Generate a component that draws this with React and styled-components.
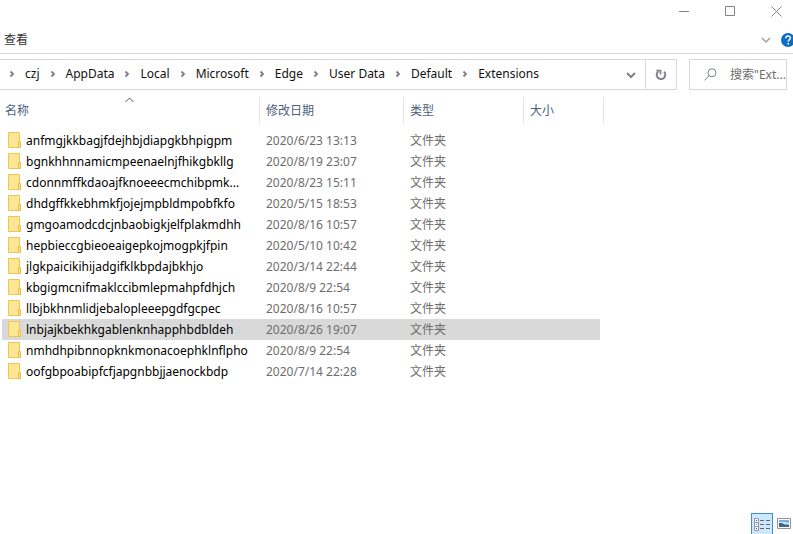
import React, { useState } from "react";
import styled, { createGlobalStyle } from "styled-components";

const GlobalStyle = createGlobalStyle`
  *, *::before, *::after { box-sizing: border-box; }
  body {
    margin: 0;
    background: #fff;
    font-family: "Noto Sans", "Noto Sans CJK SC", sans-serif;
    font-size: 12px;
    line-height: 20px;
    color: #000;
  }
  button, input, table { font: inherit; color: inherit; }
`;

const Window = styled.div`
  display: flex;
  flex-direction: column;
  min-height: 100vh;
  overflow: hidden;
`;

const TitleBar = styled.header`
  display: flex;
  justify-content: flex-end;
  height: 26px;
`;

const IconButton = styled.button`
  display: flex;
  align-items: center;
  justify-content: center;
  flex: none;
  width: ${(p) => p.$width}px;
  padding: 0;
  border: 0;
  background: transparent;
  color: ${(p) => p.$color || "#85808a"};
  svg { display: block; }
`;

const CaptionButton = styled(IconButton).attrs({ $width: 46 })`
  height: 22px;
  &:last-child { margin-right: -6px; }
`;

const Ribbon = styled.nav`
  display: flex;
  align-items: center;
  height: 28px;
  padding-left: 4px;
  border-bottom: 1px solid #d9d9d9;
`;

const RibbonTab = styled.button`
  margin-right: auto;
  padding: 0;
  border: 0;
  background: transparent;
  color: #333;
`;

const HelpButton = styled(IconButton).attrs({ $width: 14 })`
  margin-left: 8px;
  margin-right: -2px;
`;

const NavRow = styled.div`
  display: flex;
  gap: 12px;
  margin-top: 5px;
  padding-right: 6px;
`;

const AddressBar = styled.div`
  display: flex;
  flex: 1;
  min-width: 0;
  height: 31px;
  border: 1px solid #d9d9d9;
  border-left: 0;
`;

const Crumbs = styled.ol`
  display: flex;
  flex: 1;
  align-items: center;
  min-width: 0;
  margin: 0;
  padding: 0 0 1px 9px;
  list-style: none;
  white-space: nowrap;
`;

const Crumb = styled.li`
  display: flex;
  align-items: center;
  gap: 10px;
  margin-right: 10px;
  svg { display: block; }
`;

const CrumbLink = styled.a`
  color: #111;
  text-decoration: none;
`;

const RefreshButton = styled(IconButton).attrs({ $width: 31 })`
  border-left: 1px solid #d9d9d9;
`;

const SearchBox = styled.label`
  display: flex;
  align-items: center;
  gap: 13px;
  width: 98px;
  height: 31px;
  padding-left: 14px;
  border: 1px solid #d9d9d9;
  svg { flex: none; }
`;

const SearchInput = styled.input`
  flex: 1;
  min-width: 0;
  padding: 0;
  border: 0;
  outline: 0;
  background: transparent;
  &::placeholder { color: #6d6d6d; opacity: 1; }
`;

const FileArea = styled.main`
  flex: 1;
  padding: 7px 0 0 2px;
`;

const FileTable = styled.table`
  width: 602px;
  border-collapse: separate;
  border-spacing: 0;
  table-layout: fixed;
`;

const HeadCell = styled.th`
  position: relative;
  width: ${(p) => p.$width}px;
  height: 27px;
  padding: 0 0 0 ${(p) => p.$indent}px;
  border-right: 1px solid #e5e5e5;
  color: #4c607a;
  font-weight: 400;
  text-align: left;
`;

const SortMark = styled.svg`
  position: absolute;
  top: 0;
  left: 50%;
  margin-left: -6px;
`;

const Spacer = styled.tr`
  height: 6px;
`;

const FileRow = styled.tr`
  td { background-color: ${(p) => (p.$selected ? "#d9d9d9" : "transparent")}; }
`;

const Cell = styled.td`
  height: 21px;
  padding: 0 0 0 6px;
  color: #6d6d6d;
  white-space: nowrap;
  &:last-child {
    padding: 0 4px 0 0;
    background-clip: content-box;
  }
`;

const NameCell = styled(Cell)`
  color: #000;
`;

const FileName = styled.span`
  display: flex;
  align-items: center;
  gap: 5px;
  svg { flex: none; }
`;

const StatusBar = styled.footer`
  display: flex;
  justify-content: flex-end;
  height: 21px;
  overflow: hidden;
`;

const ViewButton = styled(IconButton).attrs({ $width: 22 })`
  height: 24px;
  padding-top: 2px;
  align-items: flex-start;
  border: 1px solid ${(p) => (p.$active ? "#3c91d0" : "transparent")};
  background: ${(p) => (p.$active ? "#cce8ff" : "transparent")};
  &:last-child { margin-right: -2px; }
`;

const MinimizeIcon = () => (
  <svg width="10" height="11" viewBox="0 0 10 11" fill="none" stroke="currentColor" aria-hidden="true">
    <path d="M0 5.5h10" />
  </svg>
);

const MaximizeIcon = () => (
  <svg width="11" height="11" viewBox="0 0 11 11" fill="none" stroke="currentColor" aria-hidden="true">
    <path d="M.5.5h9v9h-9z" />
  </svg>
);

const CloseIcon = () => (
  <svg width="11" height="11" viewBox="0 0 11 11" fill="none" stroke="currentColor" aria-hidden="true">
    <path d="M.5.5l10 10M10.5.5l-10 10" />
  </svg>
);

const ChevronDown = ({ weight = 1.5 }) => (
  <svg width="10" height="8" viewBox="0 0 10 8" fill="none" stroke="currentColor" strokeWidth={weight} aria-hidden="true">
    <path d="M1 2l4 4 4-4" />
  </svg>
);

const ChevronRight = () => (
  <svg width="6" height="8" viewBox="0 0 6 8" fill="none" stroke="#857b80" strokeWidth="1.8" aria-hidden="true">
    <path d="M1.5 1.5l2.5 2.5-2.5 2.5" />
  </svg>
);

const HelpIcon = () => (
  <svg width="14" height="14" viewBox="0 0 14 14" aria-hidden="true">
    <circle cx="7" cy="7" r="7" fill="#0d6cc4" />
    <path d="M4.8 5.3c0-3 4.6-3 4.6-.3 0 1.6-2.2 1.6-2.2 3.6" fill="none" stroke="#fff" strokeWidth="1.5" />
    <path d="M6.4 9.8h1.6v1.6H6.4z" fill="#fff" />
  </svg>
);

const RefreshIcon = () => (
  <svg width="12" height="12" viewBox="0 0 12 12" fill="none" stroke="currentColor" strokeWidth="2" aria-hidden="true">
    <path d="M9 2.7a4.3 4.3 0 1 1-5.500-.4" />
    <path d="M1.5 1.5h4v4" strokeWidth="1.7" />
  </svg>
);

const SearchIcon = () => (
  <svg width="13" height="13" viewBox="0 0 13 13" fill="none" stroke="#7c8487" aria-hidden="true">
    <circle cx="8" cy="4.8" r="4" />
    <path d="M5.2 7.6L.5 12.4" />
  </svg>
);

const FolderIcon = () => (
  <svg width="13" height="18" viewBox="0 0 13 18" aria-hidden="true">
    <path d="M.5.5h11v15H.5z" fill="#ffe694" stroke="#edc751" />
    <path d="M10.5 9.5h2v6h-2z" fill="#ffe694" stroke="#e8bd42" />
  </svg>
);

const DetailsIcon = () => (
  <svg width="16" height="16" viewBox="0 0 16 16" aria-hidden="true">
    {["#4a4a78", "#3c9be8", "#b02020"].map((fill, i) => (
      <g key={fill} transform={`translate(0 ${i * 4})`}>
        <path d="M.5 2.5h4v4h-4z" fill="#fff" stroke="#9a90a0" />
        <path d="M2 4h1v1H2z" fill={fill} />
        <path d="M6 4.5h4M12 4.5h4" stroke="#666" />
      </g>
    ))}
  </svg>
);

const PictureIcon = () => (
  <svg width="14" height="16" viewBox="0 0 14 16" aria-hidden="true">
    <path d="M.5 2.5h13v10H.5z" fill="#fff" stroke="#9a90a0" />
    <path d="M2 4h10v7H2z" fill="#6fb2ea" />
    <path d="M2 6h5l5 1v2H2z" fill="#d7ecfa" />
    <path d="M2 7h3l3 1.5h4V11H2z" fill="#3d6685" />
  </svg>
);

const path = ["czj", "AppData", "Local", "Microsoft", "Edge", "User Data", "Default", "Extensions"];

const columns = [
  { label: "名称", width: 258, indent: 3, sorted: true },
  { label: "修改日期", width: 144, indent: 6 },
  { label: "类型", width: 120, indent: 6 },
  { label: "大小", width: 80, indent: 6 },
];

const files = [
  ["anfmgjkkbagjfdejhbjdiapgkbhpigpm", "2020/6/23 13:13"],
  ["bgnkhhnnamicmpeenaelnjfhikgbkllg", "2020/8/19 23:07"],
  ["cdonnmffkdaoajfknoeeecmchibpmk...", "2020/8/23 15:11"],
  ["dhdgffkkebhmkfjojejmpbldmpobfkfo", "2020/5/15 18:53"],
  ["gmgoamodcdcjnbaobigkjelfplakmdhh", "2020/8/16 10:57"],
  ["hepbieccgbieoeaigepkojmogpkjfpin", "2020/5/10 10:42"],
  ["jlgkpaicikihijadgifklkbpdajbkhjo", "2020/3/14 22:44"],
  ["kbgigmcnifmaklccibmlepmahpfdhjch", "2020/8/9 22:54"],
  ["llbjbkhnmlidjebalopleeepgdfgcpec", "2020/8/16 10:57"],
  ["lnbjajkbekhkgablenknhapphbdbldeh", "2020/8/26 19:07"],
  ["nmhdhpibnnopknkmonacoephklnflpho", "2020/8/9 22:54"],
  ["oofgbpoabipfcfjapgnbbjjaenockbdp", "2020/7/14 22:28"],
];

export default function App() {
  const [selected, setSelected] = useState(9);

  return (
    <Window>
      <GlobalStyle />
      <TitleBar>
        <CaptionButton aria-label="最小化"><MinimizeIcon /></CaptionButton>
        <CaptionButton aria-label="最大化"><MaximizeIcon /></CaptionButton>
        <CaptionButton aria-label="关闭"><CloseIcon /></CaptionButton>
      </TitleBar>
      <Ribbon>
        <RibbonTab>查看</RibbonTab>
        <IconButton $width={14} $color="#a0a0a0" aria-label="展开功能区"><ChevronDown /></IconButton>
        <HelpButton aria-label="帮助"><HelpIcon /></HelpButton>
      </Ribbon>
      <NavRow>
        <AddressBar>
          <Crumbs>
            {path.map((name) => (
              <Crumb key={name}>
                <ChevronRight />
                <CrumbLink href="#">{name}</CrumbLink>
              </Crumb>
            ))}
          </Crumbs>
          <IconButton $width={28} aria-label="以前的位置"><ChevronDown weight={2} /></IconButton>
          <RefreshButton aria-label="刷新"><RefreshIcon /></RefreshButton>
        </AddressBar>
        <SearchBox>
          <SearchIcon />
          <SearchInput type="text" aria-label="搜索" placeholder={'搜索"Ext...'} />
        </SearchBox>
      </NavRow>
      <FileArea>
        <FileTable>
          <thead>
            <tr>
              {columns.map((c) => (
                <HeadCell key={c.label} scope="col" $width={c.width} $indent={c.indent}>
                  {c.label}
                  {c.sorted && (
                    <SortMark width="9" height="6" viewBox="0 0 9 6" fill="none" stroke="#555" aria-hidden="true">
                      <path d="M.5 5l4-4 4 4" />
                    </SortMark>
                  )}
                </HeadCell>
              ))}
            </tr>
          </thead>
          <tbody>
            <Spacer aria-hidden="true" />
            {files.map(([name, date], i) => (
              <FileRow key={name} $selected={i === selected} onClick={() => setSelected(i)}>
                <NameCell><FileName><FolderIcon />{name}</FileName></NameCell>
                <Cell>{date}</Cell>
                <Cell>文件夹</Cell>
                <Cell />
              </FileRow>
            ))}
          </tbody>
        </FileTable>
      </FileArea>
      <StatusBar>
        <ViewButton $active aria-label="详细信息"><DetailsIcon /></ViewButton>
        <ViewButton aria-label="大缩略图"><PictureIcon /></ViewButton>
      </StatusBar>
    </Window>
  );
}
